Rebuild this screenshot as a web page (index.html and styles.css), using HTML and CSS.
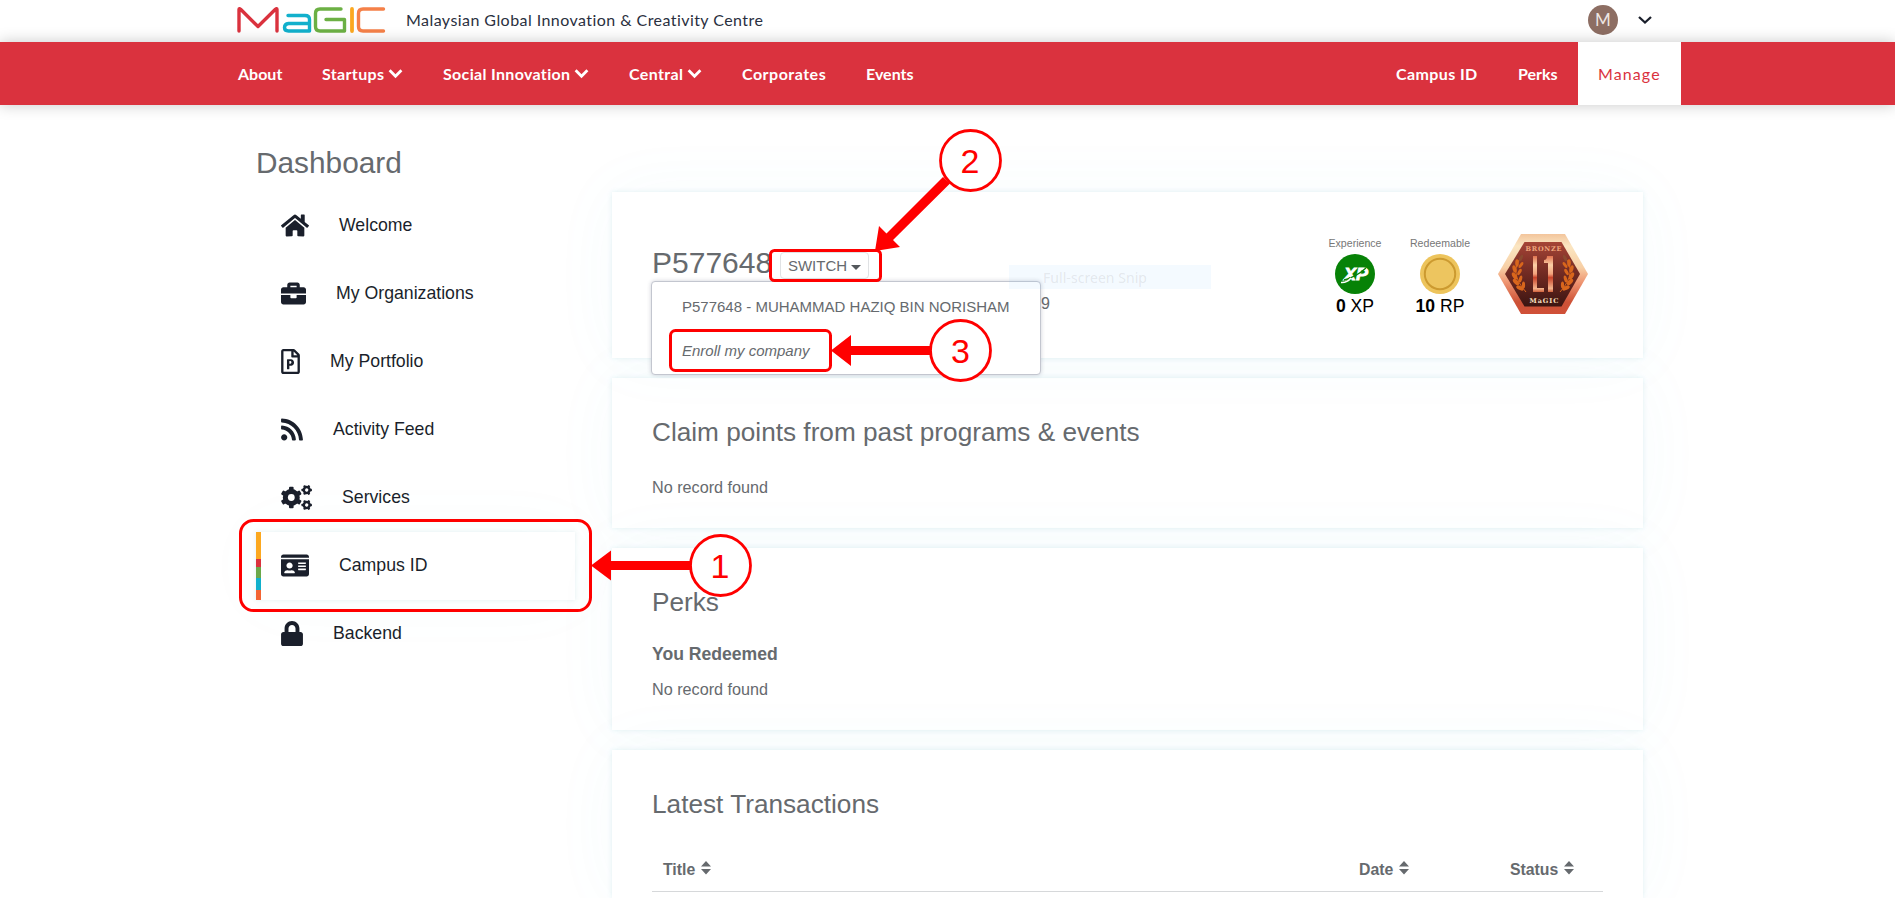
FILE: index.html
```html
<!DOCTYPE html>
<html lang="en">
<head>
<meta charset="utf-8">
<title>MaGIC Dashboard</title>
<link rel="stylesheet" href="styles.css">
</head>
<body>
<header class="top">
  <svg class="logo" width="149" height="26" viewBox="0 0 149 26" fill="none" stroke-width="3.4" stroke-linecap="round" stroke-linejoin="round">
    <path stroke="#da323e" d="M2 24V2.6Q2 1 3.6 2.3L21 19.5L38.400 2.300Q40 1 40 2.600V24"/>
    <path stroke="#12b0cc" d="M51 8.500H68Q72.500 8.500 72.500 12.500V24H51.500Q47.500 24 47.500 20.500T51.500 16.500H72"/>
    <path stroke="#6cb044" d="M104 2H83Q78.500 2 78.500 6.500V19.500Q78.500 24 83 24H107.500V12.500H89"/>
    <path stroke="#fca81f" stroke-width="3.800" d="M115 2V24"/>
    <path stroke="#f58048" d="M146.500 2H126Q121.500 2 121.500 6.500V19.500Q121.500 24 126 24H146.500"/>
  </svg>
  <span class="tagline">Malaysian Global Innovation &amp; Creativity Centre</span>
  <span class="avatar">M</span>
  <svg class="user-caret" width="16" height="10" viewBox="0 0 16 10" fill="none" stroke="#1a1f2b" stroke-width="2.300"><path d="M2 2L8 7.500L14 2"/></svg>
</header>
<nav class="nav">
  <a class="n-about">About</a>
  <a class="n-startups">Startups<svg class="chev" viewBox="0 0 14 10"><path d="M1.500 2L7 7.500L12.500 2"/></svg></a>
  <a class="n-social">Social Innovation<svg class="chev" viewBox="0 0 14 10"><path d="M1.500 2L7 7.500L12.500 2"/></svg></a>
  <a class="n-central">Central<svg class="chev" viewBox="0 0 14 10"><path d="M1.500 2L7 7.500L12.500 2"/></svg></a>
  <a class="n-corp">Corporates</a>
  <a class="n-events">Events</a>
  <a class="n-campus">Campus ID</a>
  <a class="n-perks">Perks</a>
  <a class="n-manage">Manage</a>
</nav>
<main class="page">
  <aside class="side">
    <h1>Dashboard</h1>
    <a class="item"><svg width="28" height="25" viewBox="0 0 576 512"><path d="M280.370 148.260L96 300.110V464a16 16 0 0 0 16 16l112.060-.29a16 16 0 0 0 15.920-16V368a16 16 0 0 1 16-16h64a16 16 0 0 1 16 16v95.640a16 16 0 0 0 16 16.050L464 480a16 16 0 0 0 16-16V300L295.670 148.260a12.190 12.190 0 0 0-15.300 0zM571.600 251.470L488 182.560V44.050a12 12 0 0 0-12-12h-56a12 12 0 0 0-12 12v72.610L318.470 43a48 48 0 0 0-61 0L4.340 251.470a12 12 0 0 0-1.600 16.900l25.500 31A12 12 0 0 0 45.150 301l235.220-193.740a12.190 12.190 0 0 1 15.300 0L530.900 301a12 12 0 0 0 16.900-1.600l25.500-31a12 12 0 0 0-1.700-16.930z"/></svg>Welcome</a>
    <a class="item"><svg width="25" height="25" viewBox="0 0 512 512"><path d="M320 336c0 8.840-7.160 16-16 16h-96c-8.840 0-16-7.160-16-16v-48H0v144c0 25.600 22.400 48 48 48h416c25.600 0 48-22.400 48-48V288H320v48zm144-208h-80V80c0-25.600-22.400-48-48-48H176c-25.600 0-48 22.400-48 48v48H48c-25.600 0-48 22.400-48 48v80h512v-80c0-25.600-22.400-48-48-48zm-144 0H192V96h128v32z"/></svg>My Organizations</a>
    <a class="item"><svg width="19" height="25" viewBox="0 0 384 512"><path fill-rule="evenodd" d="M369.900 97.900L286 14C277 5 264.800-.1 252.100-.1H48C21.500 0 0 21.500 0 48v416c0 26.500 21.500 48 48 48h288c26.500 0 48-21.500 48-48V131.900c0-12.700-5.100-25-14.100-34zM332.100 128H256V51.900l76.100 76.100zM48 464V48h160v104c0 13.300 10.700 24 24 24h104v288H48z"/><path fill-rule="evenodd" d="M120 404V220q0-12 12-12h69.200c36.700 0 62.800 27 62.800 66.300 0 74.300-68.700 66.500-95.500 66.500V404c0 6.600-5.400 12-12 12H132c-6.600 0-12-5.400-12-12zm48.500-104h23c25 0 28-52 .8-52h-23.800z"/></svg>My Portfolio</a>
    <a class="item"><svg width="22" height="25" viewBox="0 0 448 512"><path d="M128.081 415.959c0 35.369-28.672 64.041-64.041 64.041S0 451.328 0 415.959s28.672-64.041 64.041-64.041 64.040 28.673 64.040 64.041zm175.660 47.250c-8.354-154.600-132.185-278.587-286.950-286.950C7.656 175.765 0 183.105 0 192.253v48.069c0 8.415 6.490 15.472 14.887 16.018 111.832 7.284 201.473 96.702 208.772 208.772.547 8.397 7.604 14.887 16.018 14.887h48.069c9.149.001 16.489-7.655 15.995-16.790zm144.249.288C439.596 229.677 251.465 40.445 16.503 32.010 7.473 31.686 0 38.981 0 48.016v48.068c0 8.625 6.835 15.645 15.453 15.999 191.179 7.839 344.627 161.316 352.465 352.465.353 8.618 7.373 15.453 15.999 15.453h48.068c9.034-.001 16.329-7.474 16.005-16.504z"/></svg>Activity Feed</a>
    <a class="item"><svg width="31" height="25" viewBox="0 0 31 25">
      <defs>
        <g id="gear"><circle r="6" fill="none" stroke="#1a1f2b" stroke-width="5"/><g id="teeth"><rect x="-2.300" y="-10.700" width="4.600" height="21.400" rx="1"/></g><use href="#teeth" transform="rotate(60)"/><use href="#teeth" transform="rotate(120)"/><circle r="3.400" fill="#fff"/></g>
      </defs>
      <use href="#gear" transform="translate(10.300 12.500)"/>
      <use href="#gear" transform="translate(25.700 5) rotate(30) scale(.49)"/>
      <use href="#gear" transform="translate(25.700 20) rotate(30) scale(.49)"/>
    </svg>Services</a>
    <a class="item active"><svg width="28" height="25" viewBox="0 0 576 512"><path fill-rule="evenodd" d="M528 32H48C21.500 32 0 53.500 0 80v16h576V80c0-26.500-21.500-48-48-48zM0 432c0 26.500 21.500 48 48 48h480c26.500 0 48-21.500 48-48V128H0v304zm352-232c0-4.400 3.600-8 8-8h144c4.400 0 8 3.600 8 8v16c0 4.400-3.600 8-8 8H360c-4.400 0-8-3.600-8-8v-16zm0 64c0-4.400 3.600-8 8-8h144c4.400 0 8 3.600 8 8v16c0 4.400-3.600 8-8 8H360c-4.400 0-8-3.600-8-8v-16zm0 64c0-4.400 3.600-8 8-8h144c4.400 0 8 3.600 8 8v16c0 4.400-3.600 8-8 8H360c-4.400 0-8-3.600-8-8v-16zM176 192c35.300 0 64 28.700 64 64s-28.700 64-64 64-64-28.700-64-64 28.700-64 64-64zM67.100 396.200C75.500 370.500 99.600 352 128 352h8.200c12.300 5.100 25.700 8 39.800 8s27.600-2.900 39.800-8h8.200c28.400 0 52.500 18.500 60.900 44.200 3.200 9.900-5.200 19.800-15.600 19.800H82.700c-10.400 0-18.800-10-15.600-19.800z"/></svg>Campus ID</a>
    <a class="item"><svg width="22" height="25" viewBox="0 0 448 512"><path d="M400 224h-24v-72C376 68.200 307.800 0 224 0S72 68.200 72 152v72H48c-26.500 0-48 21.500-48 48v192c0 26.500 21.500 48 48 48h352c26.500 0 48-21.500 48-48V272c0-26.500-21.500-48-48-48zm-104 0H152v-72c0-39.700 32.300-72 72-72s72 32.300 72 72v72z"/></svg>Backend</a>
  </aside>
  <section class="cards">
    <div class="card profile">
      <div class="ident">
        <div class="ident-row"><span class="pid">P577648</span><button class="switch">SWITCH<i class="caret"></i></button></div>
        <span class="tail">9</span>
        <div class="menu"><a>P577648 - MUHAMMAD HAZIQ BIN NORISHAM</a><a class="enroll">Enroll my company</a></div>
        <span class="snip">Full-screen Snip</span>
      </div>
      <div class="stat">
        <small>Experience</small>
        <svg width="40" height="40" viewBox="0 0 40 40"><circle cx="20" cy="20" r="20" fill="#078207"/><text class="xp" x="21" y="26" text-anchor="middle" textLength="24" lengthAdjust="spacingAndGlyphs">XP</text><path d="M9 26Q21 23 31 14" stroke="#078207" stroke-width="1.300" fill="none"/><path d="M6 28.500Q12 29 16 24" stroke="#fff" stroke-width="1.500" fill="none"/></svg>
        <span><b>0</b> XP</span>
      </div>
      <div class="stat rp">
        <small>Redeemable</small>
        <svg width="40" height="40" viewBox="0 0 40 40"><circle cx="20" cy="20" r="20" fill="#edc45c"/><circle cx="20" cy="20" r="15.200" fill="#edc55f" stroke="#cc9a30" stroke-width="2"/></svg>
        <span><b>10</b> RP</span>
      </div>
      <svg class="badge" width="90" height="80" viewBox="0 0 90 80">
        <defs>
          <linearGradient id="rim" x1="0" y1="0" x2="0" y2="1"><stop offset="0" stop-color="#f3c59c"/><stop offset=".15" stop-color="#fbe6c2"/><stop offset=".42" stop-color="#f7cfa5"/><stop offset=".6" stop-color="#ef9672"/><stop offset=".85" stop-color="#cd5237"/><stop offset="1" stop-color="#d05038"/></linearGradient>
          <linearGradient id="core" x1="0" y1="0" x2="0" y2="1"><stop offset="0" stop-color="#a54436"/><stop offset=".5" stop-color="#702a22"/><stop offset="1" stop-color="#3c1512"/></linearGradient>
          <linearGradient id="shine" x1="0" y1="0" x2="0" y2="1"><stop offset="0" stop-color="#e0714f"/><stop offset=".25" stop-color="#fbd0a6"/><stop offset=".5" stop-color="#f3a27c"/><stop offset=".6" stop-color="#c8432a"/><stop offset=".9" stop-color="#f4b48c"/><stop offset="1" stop-color="#d0603c"/></linearGradient>
          <g id="laurel" fill="#d9661c"><path d="M24 22Q10 38 28 58" fill="none" stroke="#d9661c" stroke-width="1"/>
            <ellipse cx="23" cy="24" rx="1.500" ry="3.500" transform="rotate(25 23 24)" fill="#8a4a30"/><ellipse cx="19" cy="29" rx="1.800" ry="3.800"/><ellipse cx="16.500" cy="35" rx="1.900" ry="3.800" transform="rotate(-15 16.500 35)"/><ellipse cx="16.500" cy="42" rx="2" ry="4" transform="rotate(-30 16.500 42)"/><ellipse cx="18" cy="48" rx="2" ry="4" transform="rotate(-45 18 48)"/><ellipse cx="22" cy="54" rx="2" ry="4" transform="rotate(-65 22 54)"/><ellipse cx="23" cy="31" rx="1.500" ry="3.500" transform="rotate(35 23 31)"/><ellipse cx="21.500" cy="38" rx="1.600" ry="3.500" transform="rotate(30 21.500 38)"/><ellipse cx="22.500" cy="45" rx="1.600" ry="3.500" transform="rotate(15 22.500 45)"/><ellipse cx="25.500" cy="51" rx="1.600" ry="3.500"/></g>
        </defs>
        <path fill="url(#rim)" d="M23 0H67L90 40L67 80H23L0 40z"/>
        <path fill="url(#core)" d="M26.500 8H63.500L82 40L63.500 72.500H26.500L7 40z"/>
        <use href="#laurel"/><use href="#laurel" transform="translate(90 0) scale(-1 1)"/>
        <text class="b-text" x="45.500" y="16.500" text-anchor="middle" textLength="36">BRONZE</text>
        <path fill="url(#shine)" d="M35 22H39V54H46V58H35zM49 22H55V58H50V29H46V26Q49 26 49 22z"/>
        <text class="b-text b-low" x="46" y="68.500" text-anchor="middle" textLength="29">MaGIC</text>
      </svg>
    </div>
    <div class="card claim"><h2>Claim points from past programs &amp; events</h2><p>No record found</p></div>
    <div class="card perks"><h2>Perks</h2><h3>You Redeemed</h3><p>No record found</p></div>
    <div class="card trans"><h2>Latest Transactions</h2>
      <div class="thead">
        <span>Title<svg class="sort" viewBox="0 0 10 14"><path d="M5 0L10 5.500H0zM5 13.500L10 8H0z"/></svg></span>
        <span>Date<svg class="sort" viewBox="0 0 10 14"><path d="M5 0L10 5.500H0zM5 13.500L10 8H0z"/></svg></span>
        <span>Status<svg class="sort" viewBox="0 0 10 14"><path d="M5 0L10 5.500H0zM5 13.500L10 8H0z"/></svg></span>
      </div>
    </div>
  </section>
</main>
<svg class="notes" width="1895" height="900" viewBox="0 0 1895 900">
  <g fill="none" stroke="#f00" stroke-width="3">
    <rect x="240.500" y="520.500" width="350" height="90" rx="13"/>
    <rect x="770.500" y="250.500" width="110" height="30" rx="4"/>
    <rect x="670.500" y="330.500" width="160" height="40" rx="5"/>
  </g>
  <g fill="#f00">
    <path d="M591 565.500L611 550.500V561H692V570H611V580.500z"/>
    <path d="M831 350.500L851 335V346H932V355H851V366z"/>
    <path d="M875 251L879 226L886.500 233.500L943 177L950 183.500L893 240L900 247z"/>
  </g>
  <g fill="#fff" stroke="#f00" stroke-width="2.800">
    <circle cx="720.500" cy="565.500" r="30"/><circle cx="970.500" cy="160.500" r="30"/><circle cx="960.500" cy="350.500" r="30"/>
  </g>
  <g class="digits"><text x="720" y="577.500">1</text><text x="970" y="172.500">2</text><text x="960.500" y="362.500">3</text></g>
</svg>
</body>
</html>
```

FILE: styles.css
```css
* { box-sizing: border-box; }
body { margin: 0; height: 900px; overflow: hidden; position: relative; background: #fff; color: #666a6e; font-family: "Liberation Sans", Arial, sans-serif; font-size: 16px; }
.top { height: 42px; display: flex; align-items: center; padding: 0 0 3px 237px; background: #fff; font-family: Lato, sans-serif; }
.logo { flex: none; }
.tagline { margin-left: 20px; width: 360px; white-space: nowrap; font-size: 16px; letter-spacing: .44px; color: #2a3040; }
.avatar { margin-left: 822px; width: 30px; height: 30px; border-radius: 50%; background: #8d6e63; color: #eee6e2; font-size: 17px; display: flex; align-items: center; justify-content: center; }
.user-caret { margin-left: 19px; }
.nav { height: 63px; background: #da323e; display: flex; align-items: stretch; position: relative; padding-left: 238px; box-shadow: 0 0 14px rgba(0,0,0,.22); font-family: Lato, sans-serif; font-weight: 700; font-size: 16px; color: #fff; }
.nav a { display: flex; align-items: center; flex: none; white-space: nowrap; padding-bottom: 0; }
.chev { width: 15px; height: 11px; margin-left: 4px; fill: none; stroke: #fff; stroke-width: 2.600; }
.n-about { width: 84px; }
.n-startups { width: 121px; letter-spacing: .35px; }
.n-social { width: 186px; letter-spacing: .33px; }
.n-central { width: 113px; letter-spacing: .35px; }
.n-corp { width: 124px; letter-spacing: .5px; }
.n-events { width: 530px; }
.n-campus { width: 122px; letter-spacing: .4px; }
.n-perks { width: 60px; }
.nav .n-manage { width: 103px; background: #fff; color: #da323e; font-weight: 400; letter-spacing: 1.1px; padding-left: 20px; }
.page { display: flex; height: 793px; overflow: hidden; padding-left: 256px; }
.side { width: 319px; flex: none; padding-top: 37px; }
h1, h2, h3, p { margin: 0; font-weight: 400; }
h1 { font-size: 29.800px; line-height: 42px; height: 50px; }
.item { height: 68px; display: flex; align-items: center; padding: 0 0 2px 25px; gap: 30px; font-size: 17.700px; color: #1a1f2b; }
.item svg { fill: #1a1f2b; flex: none; }
.active { background: linear-gradient(#fca81f 0 27px, #da323e 27px 35px, #6aa84a 35px 46px, #0fb0cc 46px 58px, #f36433 58px) 0 0 / 5px 100% no-repeat #fff; box-shadow: 0 0 4px rgba(70,150,160,.14), 0 0 70px rgba(60,190,200,.035); }
.cards { margin-left: 37px; width: 1031px; padding-top: 87px; display: flex; flex-direction: column; gap: 20px; flex: none; }
.card { background: #fff; padding: 0 40px; flex: none; box-shadow: 0 0 5px rgba(50,150,180,.14), 0 0 70px rgba(60,190,210,.045); }
.profile { height: 166px; display: flex; position: relative; z-index: 2; }
.ident { width: 672px; padding-top: 50px; position: relative; }
.ident-row { display: flex; }
.pid { font-size: 30px; line-height: 42px; width: 128px; }
.switch { margin-top: 10px; width: 89px; height: 27px; border: 1px solid #e0e2e4; border-radius: 4px; background: #fff; color: #666a6e; font: 15px "Liberation Sans", Arial, sans-serif; padding: 0; display: flex; align-items: center; justify-content: center; gap: 4px; }
.caret { border: 5px solid transparent; border-top-color: #54585c; border-bottom: 0; margin-top: 3px; }
.tail { position: absolute; left: 389px; top: 103px; font-size: 16px; }
.menu { position: absolute; left: -1px; top: 89px; width: 390px; height: 94px; background: #fff; border: 1px solid #c3c6cf; border-radius: 4px; box-shadow: 0 0 4px rgba(40,50,80,.22); padding: 2px 30px; font-size: 15px; }
.menu a { display: block; height: 44px; line-height: 46px; white-space: nowrap; }
.enroll { font-style: italic; }
.snip { position: absolute; left: 357px; top: 73px; width: 202px; height: 24px; padding-left: 34px; line-height: 25px; font-family: "Noto Sans", sans-serif; font-size: 14px; letter-spacing: .05px; color: rgba(120,120,120,.15); background: rgba(120,190,250,.08); white-space: nowrap; }
.stat { width: 62px; padding-top: 44px; display: flex; flex-direction: column; align-items: center; color: #000; font-size: 17.600px; }
.stat small { font-size: 10.600px; line-height: 14px; height: 18px; color: #777; }
.stat span { line-height: 24px; white-space: nowrap; }
.rp { margin-left: 23px; }
.badge { margin: 42px 0 0 27px; flex: none; }
.xp { font: italic 900 17px "Liberation Sans", sans-serif; fill: #fff; stroke: #fff; stroke-width: .8; }
.b-text { font: bold 6.500px "DejaVu Serif", serif; fill: #f0a57c; }
.b-low { fill: #fbe0c2; }
h2 { font-size: 26.200px; line-height: 30px; }
.claim { height: 150px; padding-top: 39px; }
.claim p { margin-top: 30px; line-height: 20px; font-size: 16.200px; }
.perks { height: 182px; padding-top: 39px; }
h3 { font-size: 17.600px; font-weight: 700; line-height: 22px; margin-top: 26px; }
.perks p { margin-top: 14px; line-height: 20px; font-size: 16.200px; }
.trans { height: 148px; padding-top: 39px; }
.thead { margin-top: 27px; height: 46px; border-bottom: 1px solid #d6d8da; padding-left: 11px; display: grid; grid-template-columns: 696px 151px 1fr; align-items: center; font-weight: 700; font-size: 15.800px; }
.thead span { padding-top: 3px; }
.sort { width: 10px; height: 14px; margin-left: 6px; fill: #666a6e; }
.notes { position: absolute; left: 0; top: 0; z-index: 5; }
.digits { font: 34px "Liberation Sans", Arial, sans-serif; fill: #f00; text-anchor: middle; }
```
